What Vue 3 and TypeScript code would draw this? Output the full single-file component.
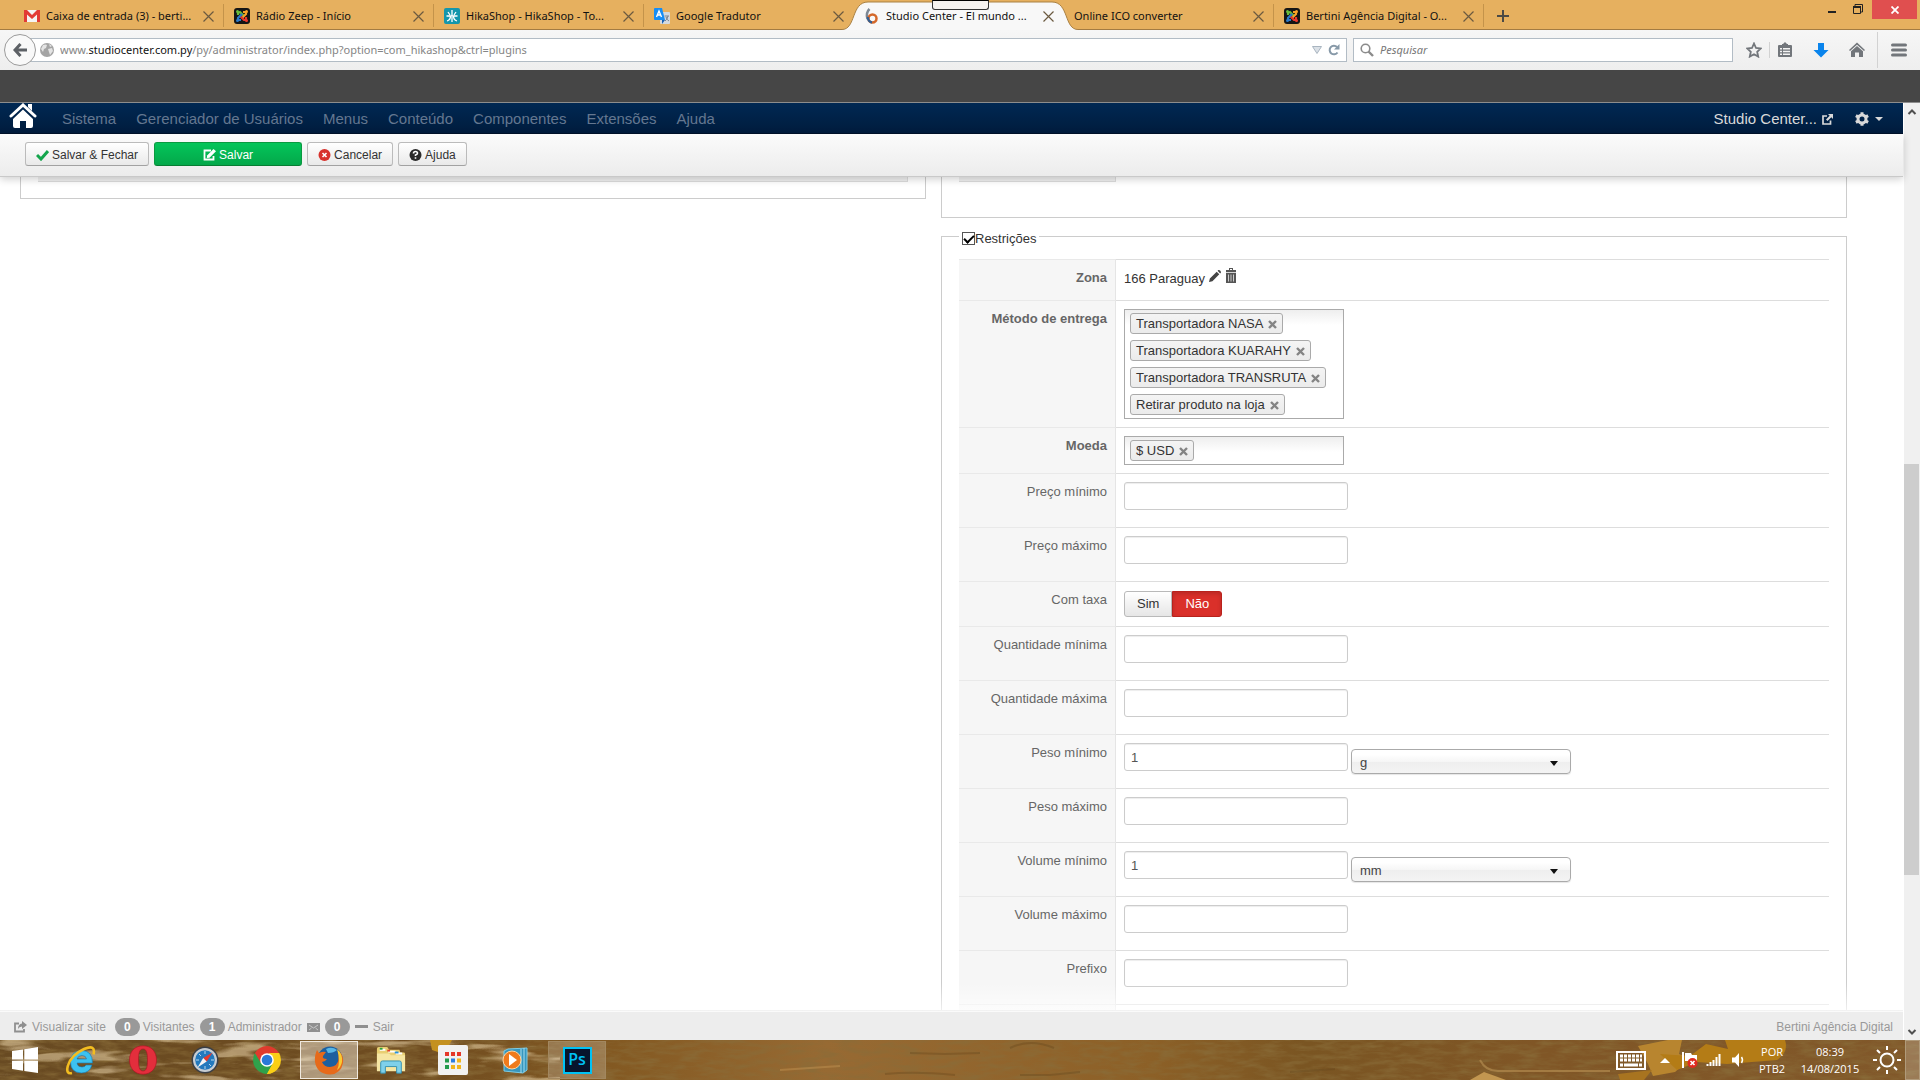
<script setup lang="ts">
import { ref } from 'vue'

interface Tab {
  title: string
  icon: 'gmail' | 'joomla' | 'hika' | 'translate' | 'studio' | 'none'
  active?: boolean
  plain?: boolean
}

const tabs: Tab[] = [
  { title: 'Caixa de entrada (3) - berti...', icon: 'gmail' },
  { title: 'Rádio Zeep - Início', icon: 'joomla' },
  { title: 'HikaShop - HikaShop - To...', icon: 'hika' },
  { title: 'Google Tradutor', icon: 'translate', plain: true },
  { title: 'Studio Center - El mundo ...', icon: 'studio', active: true, plain: true },
  { title: 'Online ICO converter', icon: 'none' },
  { title: 'Bertini Agência Digital - O...', icon: 'joomla' },
]

const menu = ['Sistema', 'Gerenciador de Usuários', 'Menus', 'Conteúdo', 'Componentes', 'Extensões', 'Ajuda']

interface Row {
  id: string
  label: string
  strong?: boolean
  kind: 'zone' | 'chips' | 'text' | 'toggle'
  chips?: string[]
  value?: string
  unit?: string
}

const rows = ref<Row[]>([
  { id: 'zone', label: 'Zona', strong: true, kind: 'zone' },
  {
    id: 'shipping',
    label: 'Método de entrega',
    strong: true,
    kind: 'chips',
    chips: ['Transportadora NASA', 'Transportadora KUARAHY', 'Transportadora TRANSRUTA', 'Retirar produto na loja'],
  },
  { id: 'currency', label: 'Moeda', strong: true, kind: 'chips', chips: ['$ USD'] },
  { id: 'price-min', label: 'Preço mínimo', kind: 'text', value: '' },
  { id: 'price-max', label: 'Preço máximo', kind: 'text', value: '' },
  { id: 'tax', label: 'Com taxa', kind: 'toggle' },
  { id: 'qty-min', label: 'Quantidade mínima', kind: 'text', value: '' },
  { id: 'qty-max', label: 'Quantidade máxima', kind: 'text', value: '' },
  { id: 'weight-min', label: 'Peso mínimo', kind: 'text', value: '1', unit: 'g' },
  { id: 'weight-max', label: 'Peso máximo', kind: 'text', value: '' },
  { id: 'volume-min', label: 'Volume mínimo', kind: 'text', value: '1', unit: 'mm' },
  { id: 'volume-max', label: 'Volume máximo', kind: 'text', value: '' },
  { id: 'prefix', label: 'Prefixo', kind: 'text', value: '' },
  { id: 'next', label: '', kind: 'text', value: '' },
])

const restricted = ref(true)
const withTax = ref(false)

function removeChip(row: Row, index: number) {
  row.chips?.splice(index, 1)
}
</script>

<template>
  <div class="screen">
    <header class="tabstrip">
      <div v-for="(tab, i) in tabs" :key="i" class="tab" :class="{ active: tab.active, plain: tab.plain }">
        <svg v-if="tab.active" class="tab-shape" viewBox="0 0 236 30" preserveAspectRatio="none" aria-hidden="true">
          <path d="M0 29.500C14 29.500 9 2 26 2H210C227 2 222 29.500 236 29.500V31H0Z" fill="#f8f8f8" />
          <path d="M0 29.500C14 29.500 9 2 26 2H210C227 2 222 29.500 236 29.500" fill="none" stroke="#a98144" />
        </svg>
        <svg v-if="tab.icon === 'gmail'" class="fav" viewBox="0 0 16 16">
          <rect y="2" width="16" height="12" fill="#f4f4f4" /><path d="M0 2h3l5 5 5-5h3v12h-3V6.500L8 11 3 6.500V14H0z" fill="#e23b35" />
        </svg>
        <svg v-else-if="tab.icon === 'joomla'" class="fav" viewBox="0 0 16 16">
          <rect width="16" height="16" rx="3" fill="#151515" />
          <path d="M4 7V5l2-1 4 4" stroke="#6abb3c" stroke-width="2.200" fill="none" />
          <path d="M9 4h3v2L8 10" stroke="#f8a227" stroke-width="2.200" fill="none" />
          <path d="M12 9v3h-2L6 8" stroke="#e8372c" stroke-width="2.200" fill="none" />
          <path d="M7 12H4v-2l4-4" stroke="#2a79c9" stroke-width="2.200" fill="none" />
          <circle cx="3.500" cy="3.500" r="1.500" fill="#6abb3c" /><circle cx="12.500" cy="3.500" r="1.500" fill="#f8a227" />
          <circle cx="3.500" cy="12.500" r="1.500" fill="#2a79c9" /><circle cx="12.500" cy="12.500" r="1.500" fill="#e8372c" />
        </svg>
        <svg v-else-if="tab.icon === 'hika'" class="fav" viewBox="0 0 16 16">
          <rect width="16" height="16" rx="2" fill="#1496ac" />
          <path d="M8 2v6M4 4l2 3M12 4l-2 3M2.500 8h11M6.500 8q0 4-3.500 5M9.500 8q0 4 3.500 5M8 9v5" stroke="#fff" stroke-width="1.300" fill="none" />
        </svg>
        <svg v-else-if="tab.icon === 'translate'" class="fav" viewBox="0 0 16 16">
          <rect x="6" y="4" width="10" height="12" rx="1" fill="#d4d9df" /><path d="M0 1q0-1 1-1h7l3 12H1q-1 0-1-1z" fill="#168df5" /><path d="M8 12h3l-3 4z" fill="#1660b5" />
          <path d="M2.500 9 5 3l2.500 6M3.500 7h3" fill="none" stroke="#fff" stroke-width="1.400" />
          <path d="M10.500 8H15M14 8q-1 4-3 5M12 9q1 3 3 4" fill="none" stroke="#7b8490" />
        </svg>
        <svg v-else-if="tab.icon === 'studio'" class="fav" viewBox="0 0 16 16">
          <path d="M5.500 1Q1.500 5 3.500 11" fill="none" stroke="#7d8894" stroke-width="2.500" />
          <circle cx="8.500" cy="10.500" r="4" fill="none" stroke="#d4682a" stroke-width="2.500" />
          <path d="M4 9a5 5 0 0 0 4 5.500" fill="none" stroke="#335f92" stroke-width="2.500" />
        </svg>
        <button class="tab-title" type="button">{{ tab.title }}</button>
        <button class="tab-close" type="button" aria-label="Fechar aba">
          <svg viewBox="0 0 11 11"><path d="M.5.5l10 10M10.500.5l-10 10" stroke="#6b5a40" stroke-width="1.200" /></svg>
        </button>
        <span v-if="tab.active" class="touch-handle"></span>
      </div>
      <button class="new-tab" type="button" aria-label="Nova aba">
        <svg viewBox="0 0 12 12"><path d="M6 0v12M0 6h12" stroke="#4c4a45" stroke-width="2" /></svg>
      </button>
      <div class="window-buttons">
        <button class="win-min" type="button" aria-label="Minimizar"></button>
        <button class="win-restore" type="button" aria-label="Restaurar">
          <svg viewBox="0 0 10 10"><path d="M2 2V.5h7.500V8H8" fill="none" stroke="#222" /><path d="M.5 2.500h7v7h-7z" fill="none" stroke="#222" /><path d="M0 3h8" stroke="#222" stroke-width="2" /></svg>
        </button>
        <button class="win-close" type="button" aria-label="Fechar">
          <svg viewBox="0 0 8 8"><path d="M.5.5l7 7M7.500.5l-7 7" stroke="#fff" stroke-width="1.800" /></svg>
        </button>
      </div>
    </header>

    <nav class="navbar">
      <button class="back" type="button" aria-label="Voltar">
        <svg viewBox="0 0 14 14"><path d="M7.500 1 2 7l5.500 6M2.500 7H14" fill="none" stroke="#5d6166" stroke-width="3" /></svg>
      </button>
      <div class="urlbar">
        <svg class="globe" viewBox="0 0 14 14">
          <circle cx="7" cy="7" r="7" fill="#a4a4a4" /><path d="M3 2q3-1 4 0L6 5 4 6 3 9 1 6zM8 6l4-1 1 3-3 4-1-3zM9 1l3 2-2 1z" fill="#e4e4e4" />
        </svg>
        <div class="address" role="textbox" aria-label="Endereço" contenteditable="true" spellcheck="false">www.<b>studiocenter.com.py</b>/py/administrator/index.php?option=com_hikashop&amp;ctrl=plugins</div>
        <svg class="history" viewBox="0 0 10 8"><path d="M.5.5h9L5 7.500z" fill="#dbe1e7" stroke="#a9b5c0" /></svg>
        <button class="reload" type="button" aria-label="Recarregar">
          <svg viewBox="0 0 12 12"><path d="M9.500 8.500A4.300 4.300 0 1 1 9 3" fill="none" stroke="#8799a8" stroke-width="2" /><path d="M11.500 0v5.500H6z" fill="#8799a8" /></svg>
        </button>
      </div>
      <div class="searchbar">
        <svg viewBox="0 0 14 14"><circle cx="5.500" cy="5.500" r="4.300" fill="none" stroke="#8b8b8b" stroke-width="1.600" /><path d="M8.500 8.500 13 13" stroke="#8b8b8b" stroke-width="2.400" /></svg>
        <input type="search" placeholder="Pesquisar" aria-label="Pesquisar">
      </div>
      <button class="tool star" type="button" aria-label="Favoritar">
        <svg viewBox="0 0 16 16"><path d="M8 1.500l2 4.500 4.800.5-3.600 3.300 1 4.800L8 12.200l-4.200 2.400 1-4.800L1.200 6.500 6 6z" fill="none" stroke="#72767b" stroke-width="1.800" /></svg>
      </button>
      <span class="sep short"></span>
      <button class="tool clip" type="button" aria-label="Lista de favoritos">
        <svg viewBox="0 0 16 16"><path d="M5 2h1l2-2 2 2h1v1h3q1 0 1 1v10q0 1-1 1H2q-1 0-1-1V4q0-1 1-1h3z" fill="#72767b" /><path d="M3 6h2v1.500H3zM6 6h7v1.500H6zM3 8.800h2v1.500H3zM6 8.800h7v1.500H6zM3 11.600h2v1.500H3zM6 11.600h7v1.500H6z" fill="#f3f3f3" /></svg>
      </button>
      <button class="tool" type="button" aria-label="Downloads">
        <svg viewBox="0 0 16 16"><path d="M5 1h6v7h4.500L8 15.500.5 8H5z" fill="#0a84ec" /></svg>
      </button>
      <button class="tool" type="button" aria-label="Página inicial">
        <svg viewBox="0 0 16 16"><path d="M8 .5l8 7.500-1 1L8 2.700 1 9 0 8z" fill="#72767b" /><path d="M8 4l6 5.300V15h-4v-4.500H6V15H2V9.300z" fill="#72767b" /></svg>
      </button>
      <span class="sep tall"></span>
      <button class="tool hamburger" type="button" aria-label="Menu">
        <svg viewBox="0 0 16 14"><path d="M1.500 2h13M1.500 7h13M1.500 12h13" stroke="#72767b" stroke-width="3" stroke-linecap="round" /></svg>
      </button>
    </nav>

    <div class="blank-strip"></div>

    <div class="viewport">
      <div class="page">
        <nav class="adminbar">
          <a class="home" href="#" aria-label="Painel">
            <svg viewBox="0 0 28 26"><path d="M2 13 14 2l12 11" fill="none" stroke="#fff" stroke-width="3" stroke-linecap="round" /><path d="M19 1h4v7l-4-4z" fill="#fff" /><path d="M14 6.500 24 16v7q0 2-2 2h-5v-7h-6v7H6q-2 0-2-2v-7z" fill="#fff" /></svg>
          </a>
          <a v-for="item in menu" :key="item" class="menu-item" href="#">{{ item }}</a>
          <a class="site-link" href="#">Studio Center...
            <svg viewBox="0 0 11 11"><path d="M5 2H1v8h7.500V6.500" fill="none" stroke="#d9d9d9" stroke-width="1.700" /><path d="M6 0h5v5L9.300 3.300 5.500 7 4 5.500 7.700 1.700z" fill="#d9d9d9" /></svg>
          </a>
          <button class="settings" type="button" aria-label="Configurações">
            <svg class="gear" viewBox="0 0 14 14"><circle cx="7" cy="7" r="4" fill="none" stroke="#d9d9d9" stroke-width="3" /><path d="M7 .2v3M7 10.800v3M.9 3.600l2.600 1.500M10.500 8.900l2.600 1.500M.9 10.400l2.600-1.500M10.500 5.100l2.600-1.500" stroke="#d9d9d9" stroke-width="3" /></svg>
            <svg class="caret" viewBox="0 0 8 4"><path d="M0 0h8L4 4z" fill="#d9d9d9" /></svg>
          </button>
        </nav>

        <div class="toolbar">
          <button class="btn" type="button">
            <svg viewBox="0 0 13 12"><path d="M1 6l4 4 7-8" fill="none" stroke="#14a54c" stroke-width="3" /></svg>Salvar &amp; Fechar
          </button>
          <button class="btn primary" type="button">
            <svg viewBox="0 0 13 12"><path d="M8 1.500H1.500v9h9V7" fill="none" stroke="#fff" stroke-width="1.800" /><path d="M10.500 0 13 2.300 6.500 8.800 3.800 9l.3-2.600z" fill="#fff" /></svg>Salvar
          </button>
          <button class="btn" type="button">
            <svg viewBox="0 0 13 12"><circle cx="6.500" cy="6" r="6" fill="#d8322c" /><path d="M4.500 4l4 4M8.500 4l-4 4" stroke="#fff" stroke-width="1.600" /></svg>Cancelar
          </button>
          <button class="btn" type="button">
            <svg viewBox="0 0 13 12"><circle cx="6.500" cy="6" r="6" fill="#2b2b2b" /><path d="M4.500 4.500q0-2 2-2t2 1.800Q8.500 5.500 6.500 6v1M6.500 8.200v1.600" fill="none" stroke="#fff" stroke-width="1.600" /></svg>Ajuda
          </button>
        </div>

        <main class="content">
          <div class="column">
            <section class="panel panel-left"><div class="strip"></div></section>
          </div>
          <div class="column">
            <section class="panel panel-right"><div class="strip narrow"></div></section>
            <fieldset class="restrictions">
              <legend>
                <input id="restricted" v-model="restricted" type="checkbox"><label for="restricted">Restrições</label>
              </legend>
              <table>
                <tbody>
                  <tr v-for="row in rows" :key="row.id">
                    <th scope="row" :class="{ strong: row.strong }">
                      <label v-if="row.kind === 'text'" :for="row.id">{{ row.label }}</label>
                      <span v-else>{{ row.label }}</span>
                    </th>
                    <td>
                      <div v-if="row.kind === 'zone'" class="zone">
                        <span>166 Paraguay</span>
                        <button type="button" aria-label="Editar">
                          <svg viewBox="0 0 14 14"><path d="M0 14l1-4 8-8 3 3-8 8zM10 1l1-1q1-.3 2 .7T14 3l-1 1z" fill="#444" /></svg>
                        </button>
                        <button type="button" aria-label="Excluir">
                          <svg viewBox="0 0 12 16"><path d="M4 0h4v2h3v2.200H1V2h3zM5 1v1h2V1zM1 5h10v10H1z" fill="#555" fill-rule="evenodd" /><path d="M3.500 6.500v7M6 6.500v7M8.500 6.500v7" stroke="#ccc" /></svg>
                        </button>
                      </div>
                      <ul v-else-if="row.kind === 'chips'" class="chips">
                        <li v-for="(chip, i) in row.chips" :key="chip">
                          <span>{{ chip }}</span>
                          <button type="button" :aria-label="`Remover ${chip}`" @click="removeChip(row, i)">
                            <svg viewBox="0 0 9 9"><path d="M1 1l7 7M8 1L1 8" stroke="#848484" stroke-width="2.400" /></svg>
                          </button>
                        </li>
                      </ul>
                      <div v-else-if="row.kind === 'toggle'" class="toggle">
                        <button type="button" :class="{ no: withTax }" @click="withTax = true">Sim</button>
                        <button type="button" :class="{ no: !withTax }" @click="withTax = false">Não</button>
                      </div>
                      <div v-else class="field">
                        <input :id="row.id" v-model="row.value" type="text">
                        <span v-if="row.unit" class="unit">
                          <select :aria-label="`Unidade de ${row.label}`"><option>{{ row.unit }}</option></select>
                          <svg viewBox="0 0 8 5"><path d="M0 0h8L4 5z" fill="#111" /></svg>
                        </span>
                      </div>
                    </td>
                  </tr>
                </tbody>
              </table>
            </fieldset>
          </div>
        </main>

        <footer class="status">
          <a href="#">
            <svg viewBox="0 0 13 12"><path d="M5 2.500H1v8h9V8" fill="none" stroke="#8f8f8f" stroke-width="1.800" /><path d="M8 0l5 4-5 4V5.500Q5 5.500 4 8q0-5 4-5.500z" fill="#8f8f8f" /></svg>Visualizar site
          </a>
          <span class="badge first">0</span><span>Visitantes</span>
          <span class="badge">1</span><span>Administrador</span>
          <svg class="mail" viewBox="0 0 13 9"><path d="M0 0h13v9H0z" fill="#8f8f8f" /><path d="M2 2l4.500 3L11 2M2 7l2.500-2M11 7 8.500 5" fill="none" stroke="#d5d5d5" stroke-width=".8" /></svg>
          <span class="badge">0</span>
          <a href="#"><svg viewBox="0 0 13 12"><path d="M0 4h13v3H0z" fill="#8f8f8f" /></svg>Sair</a>
          <span class="owner">Bertini Agência Digital</span>
        </footer>
      </div>
      <div class="scrollbar" aria-hidden="true">
        <svg viewBox="0 0 16 16"><path d="M4.500 11 8 7.500l3.500 3.500" fill="none" stroke="#505050" stroke-width="2" /></svg>
        <span></span><span class="thumb"></span><span></span>
        <svg viewBox="0 0 16 16"><path d="M4.500 6 8 9.500 11.500 6" fill="none" stroke="#505050" stroke-width="2" /></svg>
      </div>
    </div>

    <footer class="taskbar">
      <svg class="wallpaper" viewBox="0 0 1920 40" preserveAspectRatio="none" aria-hidden="true">
        <defs>
          <linearGradient id="wood" x1="0" x2="1" y1="0" y2="0">
            <stop offset="0" stop-color="#684a22" /><stop offset=".22" stop-color="#6f4c20" /><stop offset=".32" stop-color="#835922" />
            <stop offset=".43" stop-color="#976a33" /><stop offset=".6" stop-color="#8c6027" /><stop offset=".68" stop-color="#7a5522" />
            <stop offset=".8" stop-color="#805626" /><stop offset="1" stop-color="#81582a" />
          </linearGradient>
          <filter id="grain" x="0" y="0" width="100%" height="100%">
            <feTurbulence type="fractalNoise" baseFrequency=".05 .2" numOctaves="4" seed="5" />
            <feColorMatrix values="0 0 0 0 .25  0 0 0 0 .15  0 0 0 0 .04  1.600 0 0 0 -.6" />
          </filter>
          <filter id="scratches" x="0" y="0" width="100%" height="100%">
            <feTurbulence type="fractalNoise" baseFrequency=".015 .09" numOctaves="3" seed="11" />
            <feColorMatrix values="0 0 0 0 .74  0 0 0 0 .58  0 0 0 0 .34  6 0 0 0 -3.300" />
          </filter>
        </defs>
        <rect width="1920" height="40" fill="url(#wood)" />
        <rect width="1920" height="40" filter="url(#grain)" />
        <rect width="560" height="40" filter="url(#scratches)" opacity=".6" />
        <path d="M1480 20q6 12 20 11h110" stroke="#b28a4e" stroke-width="2" fill="none" opacity=".7" />
        <path d="M430 0h22l-8 14-12-4z" fill="#c49120" />
        <g stroke="#5e4018" opacity=".3" stroke-width="2" fill="none"><path d="M910 13l35 1 35-1M885 34q30-3 70 1M1020 35l30 0 30-3M1290 32l45-3M1010 8q20-10 44 0" /></g>
        <path d="M780 30l60-4" stroke="#c09150" opacity=".5" stroke-width="2" />
        <path d="M1638 6l30-6h14l-3 14 12 4-16 14-22 4-5-12z" fill="#b8852f" />
        <path d="M1660 14l30 2 16-12 22 5-3-9h60q4 12-8 20l-50 4-30-2-20 8z" fill="#b47c16" />
        <path d="M1618 34l34-4-8 10h-24z" fill="#a87420" />
        <path d="M1470 40l14-8 22 8z" fill="#c29650" />
      </svg>

      <div class="apps">
        <button type="button" aria-label="Iniciar" class="start">
          <svg viewBox="0 0 26 26"><path d="M0 4l11-1.600V12.500H0zM12.300 2.200 26 0v12.500H12.300zM0 13.700h11v10L0 22zM12.300 13.700H26V26l-13.700-2z" fill="#fff" /></svg>
        </button>
        <button type="button" aria-label="Internet Explorer">
          <svg viewBox="0 0 30 30"><path d="M15.500 5.500q11 0 11 12.500H11q.5 4 5 4 3 0 4-2h6Q23.500 28 15.500 28 4.500 27.500 4.500 17t11-11.500zM11 14h9.500Q20 10.500 16 10.500T11 14z" fill="#3cc2f0" stroke="#1573b0" stroke-width=".6" /><path d="M27.500 9.500Q30-1 18 4 5 10 1.800 21-.3 29.500 6 28" fill="none" stroke="#f3bd20" stroke-width="2.600" /></svg>
        </button>
        <button type="button" aria-label="Opera">
          <svg viewBox="0 0 30 30"><path fill-rule="evenodd" d="M15 .8c8.500 0 13.500 6 13.500 14.200s-5 14.200-13.500 14.200S1.500 23.200 1.500 15 6.500.8 15 .8zM15 4c-3.500 0-4.500 4-4.500 11S11.500 26 15 26s4.500-4 4.500-11S18.500 4 15 4z" fill="#e32e3c" stroke="#a91224" stroke-width=".6" /></svg>
        </button>
        <button type="button" aria-label="Safari">
          <svg viewBox="0 0 30 30"><circle cx="15" cy="15" r="13.500" fill="#3a3f46" /><circle cx="15" cy="15" r="12" fill="#c7cdd3" /><circle cx="15" cy="15" r="9.800" fill="#2379bd" /><path d="M15 6v3M15 21v3M6 15h3M21 15h3M9 9l2 2M19 19l2 2" stroke="#b7d8ef" /><path d="M22.500 7.500 13.200 13l3.500 3.500z" fill="#e83a2c" /><path d="M7.500 22.500 13.200 13l3.500 3.500z" fill="#f5f5f5" /></svg>
        </button>
        <button type="button" aria-label="Chrome">
          <svg viewBox="0 0 30 30"><path d="M15 15 2.900 8A14 14 0 0 1 27.100 8z" fill="#e03a2d" /><path d="M15 15 27.100 8A14 14 0 0 1 15 29z" fill="#fbcf16" /><path d="M15 15v14A14 14 0 0 1 2.900 8z" fill="#2fa14b" /><path d="M9 18 2.900 8 15 8z" fill="#e03a2d" /><path d="M21 18l-6 11-6-11z" fill="#2fa14b" /><path d="M21.200 18 15 29q14-1 12.100-21H17z" fill="#fbcf16" /><circle cx="15" cy="15" r="6.800" fill="#fff" /><circle cx="15" cy="15" r="5.300" fill="#2b79d8" /></svg>
        </button>
        <button type="button" aria-label="Firefox" class="framed current">
          <svg viewBox="0 0 30 30"><circle cx="16" cy="14" r="12.500" fill="#1d5f9f" /><path d="M12 4q6-3 11 1-3 3-9 3z" fill="#58b6e6" /><path d="M25 6q5 5 4 12-2 11-13 11.500Q3 29 1 17 .5 10 3 5l2 3q4-2 7-1l-3 4q-1 3 4 3-2 3-5 3 2 5 8 5 8-1 8.500-8 .5-4-.500-8z" fill="#e66a1a" /><path d="M23 4q6 5 5 13-1 5-5 8 4-8 0-21z" fill="#f9ca33" /></svg>
        </button>
        <button type="button" aria-label="Explorador de Arquivos">
          <svg viewBox="0 0 32 30"><path d="M1 3q0-2 2-2h9l2 3h11l1 3h4q1 0 1 2v17H1z" fill="#e9cf72" /><path d="M4 3h6v2H4zM13 5h8v2h-8zM21 7h7v2h-7z" fill="#fff" /><path d="M4 2h3v2H4z" fill="#2aa33b" /><path d="M12 4h3v2h-3z" fill="#e34428" /><path d="M20 6h4v2h-4z" fill="#2993dc" /><path d="M1 8h13l2 2h15v17H1z" fill="#f6e6a3" /><path d="M5 29V18q0-2 2-2h18q2 0 2 2v11h-5v-7H10v7z" fill="#7fd0ea" stroke="#348fae" /></svg>
        </button>
        <button type="button" aria-label="Aplicativos">
          <svg viewBox="0 0 30 30"><rect width="30" height="30" rx="2" fill="#f1f1f1" /><path d="M7 7h4v4H7zM13 7h4v4h-4zM19 7h4v4h-4z" fill="#e53829" /><path d="M7 13.500h4v4H7zM7 20h4v4H7z" fill="#239a4b" /><path d="M13 13.500h4v4h-4z" fill="#2c7de0" /><path d="M13 20h4v4h-4zM19 20h4v4h-4zM19 13.500h4v4h-4z" fill="#f2b51d" /></svg>
        </button>
        <button type="button" aria-label="Media Player">
          <svg viewBox="0 0 30 30"><path d="M8 4l19-1v22l-4 3-19-2V6z" fill="#3796bd" stroke="#7dcbe4" /><path d="M21 4v24M24 3v24" stroke="#a5def0" /><circle cx="12" cy="15" r="9" fill="#ef7a1b" stroke="#ffd6a1" /><path d="M9 9l8 6-8 6z" fill="#fff" /></svg>
        </button>
        <button type="button" class="framed ps"><span>Ps</span></button>
      </div>

      <div class="tray">
        <svg class="keyboard" viewBox="0 0 30 19"><rect x="1" y="1" width="28" height="17" fill="none" stroke="#fff" stroke-width="2" /><path d="M4 5h22M4 9h22" stroke="#fff" stroke-width="3" stroke-dasharray="3 1" /><path d="M4 14h3M8 14h14M23 14h3" stroke="#fff" stroke-width="3" /></svg>
        <svg class="up" viewBox="0 0 10 5"><path d="M0 5l5-5 5 5z" fill="#fff" /></svg>
        <svg class="flag" viewBox="0 0 16 16"><path d="M1 0v16" stroke="#fff" stroke-width="2" /><path d="M3 1h6l1 2h5v8H9L8 9H3z" fill="#fff" /><circle cx="10.500" cy="11" r="5" fill="#e02b20" /><path d="M8.500 9l4 4M12.500 9l-4 4" stroke="#fff" stroke-width="1.600" /></svg>
        <svg class="signal" viewBox="0 0 16 12"><path d="M1.500 12v-2M4.500 12V8M7.500 12V6M10.500 12V3M13.500 12V0" stroke="#fff" stroke-width="2" /></svg>
        <svg class="speaker" viewBox="0 0 13 14"><path d="M0 4.500h3L7 0v14L3 9.500H0z" fill="#fff" /><path d="M9.500 4q2 3 0 6" fill="none" stroke="#fff" stroke-width="1.500" /></svg>
        <div class="tray-text lang"><span>POR</span><span>PTB2</span></div>
        <div class="tray-text clock"><span>08:39</span><span>14/08/2015</span></div>
        <svg class="sun" viewBox="0 0 28 28"><circle cx="14" cy="14" r="6.500" fill="none" stroke="#fff" stroke-width="2" /><path d="M14 0v4M14 24v4M0 14h4M24 14h4M4 4l3 3M21 21l3 3M24 4l-3 3M7 21l-3 3" stroke="#fff" stroke-width="2" /></svg>
        <button class="desktop" type="button" aria-label="Mostrar área de trabalho"></button>
      </div>
    </footer>
  </div>
</template>

<style>
body {
  margin: 0;
}
</style>

<style scoped>
* {
  box-sizing: border-box;
}

.screen {
  display: flex;
  flex-direction: column;
  height: 100vh;
  overflow: hidden;
  background: #fff;
  color: #333;
  font: 13px/18px 'Liberation Sans', sans-serif;
}

button {
  margin: 0;
  padding: 0;
  border: 0;
  background: none;
  color: inherit;
  font: inherit;
  cursor: pointer;
}

a {
  color: inherit;
  text-decoration: none;
}

svg {
  display: block;
  flex: none;
}

/* browser chrome */
.tabstrip {
  display: flex;
  align-items: stretch;
  flex: none;
  height: 30px;
  padding-left: 14px;
  background: #e6b05f;
  border-bottom: 1px solid #a37b42;
  color: #111;
  font: 11px/16px 'Noto Sans', sans-serif;
}

.tab {
  position: relative;
  display: flex;
  align-items: center;
  flex: 0 1 210px;
  gap: 6px;
  min-width: 0;
  padding: 3px 10px 0;
  background: linear-gradient(#c4934a, #c4934a) right 4px / 1px 23px no-repeat;
}

.tab.plain {
  background: none;
}

.tab.active {
  z-index: 1;
}

.tab-shape {
  position: absolute;
  left: -12px;
  top: 0;
  width: 236px;
  height: 30px;
}

.fav {
  position: relative;
  width: 16px;
  height: 16px;
}

.tab-title {
  position: relative;
  flex: 1;
  min-width: 0;
  overflow: hidden;
  text-align: left;
  white-space: nowrap;
}

.tab-close,
.new-tab {
  position: relative;
}

.tab-close svg {
  width: 11px;
  height: 11px;
}

.touch-handle {
  position: absolute;
  left: 78px;
  top: 0;
  width: 57px;
  height: 10px;
  border: 1px solid #333;
  border-top-color: #000;
  border-radius: 0 0 3px 3px;
  background: #f6f3f0;
}

.new-tab {
  padding: 3px 13px 0;
}

.new-tab svg {
  width: 12px;
  height: 12px;
}

.window-buttons {
  display: flex;
  align-items: flex-start;
  margin-left: auto;
  padding-right: 3px;
}

.win-min {
  width: 8px;
  height: 2px;
  margin: 11px 17px 0 0;
  background: #222;
}

.win-restore {
  margin: 4px 9px 0 0;
}

.win-restore svg {
  width: 10px;
  height: 10px;
}

.win-close {
  display: flex;
  align-items: center;
  justify-content: center;
  width: 45px;
  height: 19px;
  background: #e04f4f;
}

.win-close svg {
  width: 8px;
  height: 8px;
}

.navbar {
  display: flex;
  align-items: center;
  flex: none;
  height: 40px;
  padding: 0 13px 0 4px;
  background: linear-gradient(#f6f6f6, #eee);
  font: 11px/16px 'Noto Sans', sans-serif;
}

.back {
  position: relative;
  display: flex;
  align-items: center;
  justify-content: center;
  width: 32px;
  height: 32px;
  border: 1px solid #9b9b9b;
  border-radius: 50%;
  background: #f9f9f9;
}

.back svg {
  width: 14px;
  height: 14px;
}

.urlbar,
.searchbar {
  display: flex;
  align-items: center;
  height: 24px;
  border: 1px solid #b2bcc5;
  background: #fff;
}

.urlbar {
  flex: 1;
  min-width: 0;
  margin: 0 6px 0 -6px;
  padding: 0 6px 0 9px;
}

.globe {
  width: 14px;
  height: 14px;
}

.address {
  flex: 1;
  min-width: 0;
  margin-left: 6px;
  overflow: hidden;
  color: #858585;
  white-space: nowrap;
}

.address b {
  color: #111;
  font-weight: 400;
}

.history {
  width: 10px;
  height: 8px;
  margin-right: 6px;
}

.reload svg {
  width: 12px;
  height: 12px;
}

.searchbar {
  flex: 0 1 380px;
  gap: 6px;
  padding: 0 6px;
}

.searchbar svg {
  width: 14px;
  height: 14px;
}

.searchbar input {
  flex: 1;
  min-width: 0;
  padding: 0;
  border: 0;
  outline: 0;
  background: none;
  font: inherit;
}

.searchbar input::placeholder {
  color: #777;
  font-style: italic;
}

.tool {
  margin-left: 20px;
}

.tool svg {
  width: 16px;
  height: 16px;
}

.tool.star {
  margin-left: 13px;
}

.tool.clip {
  margin-left: 7px;
}

.tool.hamburger {
  margin-left: 13px;
}

.sep {
  width: 1px;
  background: #d2d2d2;
}

.sep.short {
  height: 16px;
  margin-left: 7px;
}

.sep.tall {
  height: 36px;
  margin-left: 12px;
}

.blank-strip {
  flex: none;
  height: 33px;
  border-bottom: 1px solid #8d8d8d;
  background: #464646;
}

/* administrator page */
.viewport {
  display: flex;
  flex: 1;
  min-height: 0;
}

.page {
  display: flex;
  flex: 1;
  flex-direction: column;
  min-width: 0;
}

.adminbar {
  display: flex;
  align-items: center;
  flex: none;
  gap: 20px;
  height: 31px;
  padding: 2px 20px 0 9px;
  border-bottom: 1px solid #00122b;
  background: linear-gradient(#002853, #001c3d);
  color: #647790;
  font-size: 15px;
  line-height: 20px;
}

.adminbar .home {
  align-self: flex-start;
  margin: -2px 5px 0 0;
}

.home svg {
  width: 28px;
  height: 26px;
}

.site-link {
  display: flex;
  align-items: center;
  gap: 5px;
  margin-left: auto;
  margin-right: 2px;
  color: #d9d9d9;
}

.site-link svg {
  width: 11px;
  height: 11px;
}

.settings {
  display: flex;
  align-items: center;
  gap: 6px;
}

.gear {
  width: 14px;
  height: 14px;
}

.caret {
  width: 8px;
  height: 4px;
}

.toolbar {
  position: relative;
  z-index: 1;
  display: flex;
  align-items: flex-start;
  flex: none;
  gap: 5px;
  height: 43px;
  padding: 8px 25px;
  border-bottom: 1px solid #c9c9c9;
  background: linear-gradient(#fbfbfb, #ececec);
  box-shadow: 0 2px 8px rgba(0, 0, 0, .2);
}

.btn {
  display: flex;
  align-items: center;
  justify-content: center;
  gap: 3px;
  height: 24px;
  padding: 1px 10px 0;
  border: 1px solid #bbb;
  border-bottom-color: #a2a2a2;
  border-radius: 3px;
  background: linear-gradient(#fff, #e9e9e9);
  font-size: 12px;
}

.btn svg {
  width: 13px;
  height: 12px;
}

.btn.primary {
  width: 148px;
  border-color: #0a9a40;
  border-bottom-color: #087d33;
  background: linear-gradient(#04c55a, #04a84a);
  color: #fff;
}

.content {
  display: grid;
  grid-template-columns: 1fr 1fr;
  gap: 15px;
  flex: 1;
  min-height: 0;
  padding: 0 56px 0 20px;
  overflow: hidden;
}

.panel {
  border: 1px solid #ccc;
  border-top: 0;
  padding: 0 17px;
}

.panel-left {
  height: 22px;
}

.panel-right {
  height: 41px;
}

.strip {
  height: 5px;
  border: solid #ddd;
  border-width: 0 1px 1px 0;
  background: #f0f0f0;
}

.strip.narrow {
  width: 157px;
}

.restrictions {
  min-width: 0;
  margin: 8px 0 0;
  padding: 13px 17px 8px;
  border: 1px solid #ccc;
}

legend {
  display: flex;
  align-items: center;
  height: 20px;
  padding: 5px 3px 0;
}

legend input {
  appearance: none;
  width: 13px;
  height: 13px;
  margin: 0;
  border: 1px solid #555;
  background: #fff;
}

legend input:checked::before {
  display: block;
  width: 8px;
  height: 4px;
  margin: 2px 0 0 1px;
  border: solid #000;
  border-width: 0 0 2px 2px;
  content: '';
  transform: rotate(-45deg);
}

table {
  width: 100%;
  border-spacing: 0;
}

th,
td {
  padding: 8px;
  border-top: 1px solid #ddd;
  vertical-align: top;
}

th {
  width: 157px;
  padding-top: 9px;
  padding-bottom: 7px;
  border-top-color: #e9e9e9;
  border-right: 1px solid #e5e5e5;
  background: #f6f6f6;
  color: #666;
  font-weight: 400;
  text-align: right;
}

th.strong {
  font-weight: 700;
}

.zone {
  display: flex;
  align-items: flex-start;
  height: 24px;
  gap: 4px;
}

.zone span {
  margin-top: 2px;
}

.zone svg {
  width: 12px;
  height: 16px;
}

.chips {
  width: 220px;
  margin: 0;
  padding: 0 0 0 5px;
  border: 1px solid #aaa;
  background: linear-gradient(#eee, #fff 15px);
  list-style: none;
}

.chips li {
  display: flex;
  align-items: center;
  gap: 5px;
  width: max-content;
  height: 21px;
  margin: 3px 0;
  padding: 1px 5px 0;
  border: 1px solid #aaa;
  border-radius: 3px;
  background: linear-gradient(#f4f4f4, #ebebeb);
}

.chips li + li {
  margin-top: 6px;
}

.chips::before,
.chips::after {
  display: table;
  content: '';
}

.chips svg {
  width: 9px;
  height: 9px;
}

.toggle {
  display: flex;
  padding: 1px 0;
}

.toggle button {
  height: 26px;
  padding: 0 12px;
  border: 1px solid #b9b9b9;
  border-radius: 3px 0 0 3px;
  background: linear-gradient(#fff, #e6e6e6);
}

.toggle button + button {
  border-radius: 0 3px 3px 0;
}

.toggle .no {
  border-color: #b8221c;
  background: #da302a;
  box-shadow: inset 0 2px 4px rgba(0, 0, 0, .15);
  color: #fff;
}

.field {
  display: flex;
  align-items: flex-start;
  gap: 3px;
}

.field input {
  width: 224px;
  height: 28px;
  margin: 0 0 9px;
  padding: 4px 6px;
  border: 1px solid #ccc;
  border-radius: 3px;
  box-shadow: inset 0 1px 1px rgba(0, 0, 0, .075);
  color: #555;
  font: inherit;
}

.unit {
  position: relative;
  margin-top: 6px;
}

.unit select {
  display: block;
  appearance: none;
  width: 220px;
  height: 25px;
  padding: 2px 8px 0;
  border: 1px solid #aaa;
  border-radius: 4px;
  background: linear-gradient(#fff 20%, #f6f6f6 50%, #eee 52%, #f4f4f4 100%);
  box-shadow: 0 1px 1px rgba(0, 0, 0, .1);
  color: #444;
  font: inherit;
}

.unit svg {
  position: absolute;
  right: 13px;
  top: 12px;
  width: 8px;
  height: 5px;
  pointer-events: none;
}

.status {
  position: relative;
  display: flex;
  align-items: center;
  flex: none;
  gap: 5px;
  height: 30px;
  padding: 3px 10px 0 14px;
  border-top: 1px solid #d5d5d5;
  background: #ededed;
  box-shadow: inset 0 1px #fafafa;
  color: #999;
  font-size: 12px;
}

.status::before {
  position: absolute;
  right: 0;
  bottom: 100%;
  left: 0;
  height: 28px;
  background: linear-gradient(rgba(255, 255, 255, 0), rgba(255, 255, 255, .7));
  content: '';
}

.status a {
  display: flex;
  align-items: center;
  gap: 5px;
}

.status svg {
  width: 13px;
  height: 12px;
}

.status .mail {
  height: 9px;
}

.badge {
  width: 25px;
  margin-right: -2px;
  border-radius: 9px;
  background: #999;
  color: #fff;
  font-weight: 700;
  text-align: center;
}

.badge.first {
  margin-left: 4px;
}

.badge + a {
  margin-left: 2px;
}

.owner {
  margin-left: auto;
}

.scrollbar {
  display: grid;
  grid-template-rows: 16px 345fr 411fr 149fr 16px;
  flex: none;
  width: 17px;
  border-left: 1px solid #fff;
  background: #f0f0f0;
}

.scrollbar svg {
  width: 16px;
  height: 16px;
}

.thumb {
  margin-right: 1px;
  background: #cdcdcd;
}

/* system taskbar */
.taskbar {
  position: relative;
  display: flex;
  align-items: stretch;
  justify-content: space-between;
  flex: none;
  height: 40px;
}

.wallpaper {
  position: absolute;
  inset: 0;
  width: 100%;
  height: 100%;
}

.apps,
.tray {
  position: relative;
  display: flex;
  align-items: center;
}

.apps button {
  display: flex;
  align-items: center;
  justify-content: center;
  width: 62px;
  height: 38px;
}

.apps svg {
  width: 30px;
  height: 30px;
}

.apps .start {
  width: 50px;
}

.apps .start svg {
  width: 26px;
  height: 26px;
}

.apps .framed {
  width: 58px;
  margin: 0 2px;
  border: 1px solid #a2875f;
  background: rgba(255, 255, 255, .2);
}

.apps .current {
  border-color: #f0e9de;
  background: rgba(235, 225, 210, .5);
}

.ps span {
  width: 29px;
  height: 27px;
  border: 2px solid #00c2f5;
  background: #07142c;
  color: #00c2f5;
  font: 600 16px/21px 'Open Sans', sans-serif;
}

.keyboard {
  width: 30px;
  height: 19px;
}

.up {
  width: 10px;
  height: 5px;
  margin-left: 14px;
}

.flag {
  width: 16px;
  height: 16px;
  margin-left: 12px;
}

.signal {
  width: 16px;
  height: 12px;
  margin-left: 8px;
}

.speaker {
  width: 13px;
  height: 14px;
  margin-left: 10px;
}

.tray-text {
  display: flex;
  flex-direction: column;
  align-items: center;
  color: #fff;
  font: 11px/17px 'Open Sans', sans-serif;
}

.lang {
  width: 30px;
  margin-left: 12px;
}

.clock {
  width: 62px;
  margin-left: 12px;
}

.sun {
  width: 28px;
  height: 28px;
  margin-left: 12px;
}

.desktop {
  align-self: stretch;
  width: 15px;
  margin-left: 4px;
  border: 1px solid #b09a7a;
  background: rgba(255, 255, 255, .2);
}
</style>
